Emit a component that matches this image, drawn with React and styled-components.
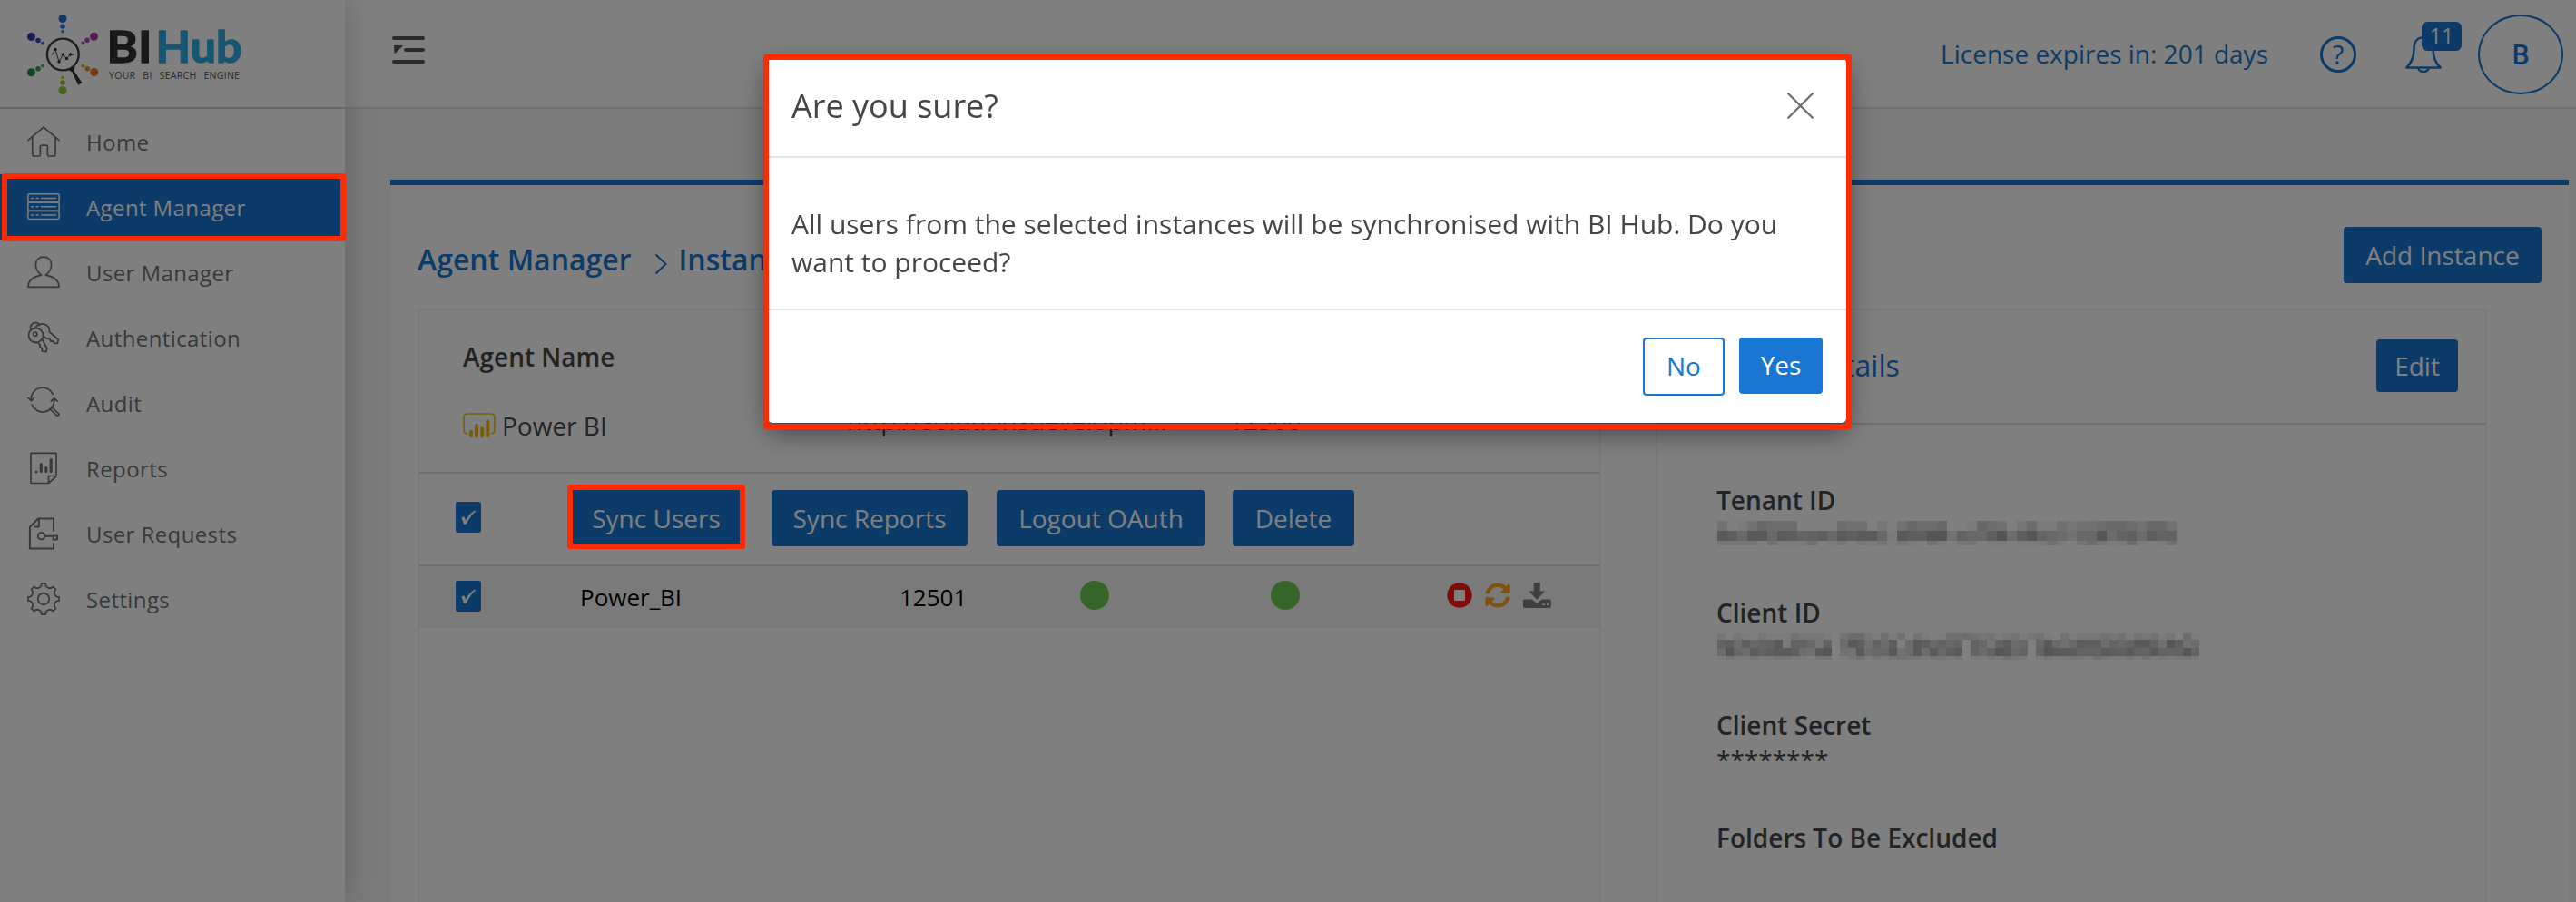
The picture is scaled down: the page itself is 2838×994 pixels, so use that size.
import React from "react";
import styled, { createGlobalStyle, css } from "styled-components";

const BLUE = "#1976d2";
const RED = "#ff2a00";

const GlobalStyle = createGlobalStyle`
  *, *::before, *::after { box-sizing: border-box; }
  html, body { margin: 0; height: 994px; overflow: hidden; }
  body {
    background: #f5f5f5;
    color: #444547;
    font-family: "Open Sans", "Noto Sans", sans-serif;
    font-size: 28px;
    line-height: 38px;
  }
`;

const Shell = styled.div`
  display: flex;
  width: 2838px;
  height: 994px;
  overflow: hidden;
`;

/* Sidebar */
const Sidebar = styled.aside`
  position: relative;
  flex: 0 0 380px;
  background: #fff;
  box-shadow: 0 0 32px rgba(0, 0, 0, 0.2);
`;

const Brand = styled.div`
  height: 120px;
  border-bottom: 2px solid #cfcfcf;
`;

const NavItem = styled.a`
  position: relative;
  display: flex;
  align-items: center;
  gap: 29px;
  height: 72px;
  padding-left: 30px;
  font-size: 24px;
  letter-spacing: 0.4px;
  color: ${(p) => (p.$active ? "#fff" : "#707376")};
  background: ${(p) => (p.$active ? BLUE : "transparent")};
  svg {
    width: 36px;
    height: 36px;
    fill: none;
    stroke: currentColor;
    stroke-width: 1.7;
    stroke-linejoin: round;
    stroke-linecap: round;
  }
`;

const NavLabel = styled.span`
  padding-top: 2px;
`;

const Highlight = styled.span`
  position: absolute;
  z-index: 20;
  top: ${(p) => p.$top}px;
  left: ${(p) => p.$left}px;
  width: ${(p) => p.$w}px;
  height: ${(p) => p.$h}px;
  border: 6px solid ${RED};
  border-radius: 3px;
  pointer-events: none;
`;

/* Main column */
const Main = styled.div`
  flex: 1;
  min-width: 0;
`;

const TopBar = styled.header`
  display: flex;
  align-items: center;
  height: 120px;
  padding: 2px 14px 0 52px;
  background: #fff;
  border-bottom: 2px solid #e0e0e0;
  color: ${BLUE};
`;

const MenuToggle = styled.button`
  width: 36px;
  height: 30px;
  margin: -10px auto 0 0;
  padding: 0;
  border: 0;
  background: none;
  svg { display: block; }
`;

const License = styled.span`
  margin: -3px 57px 0 0;
`;

const HeaderIcon = styled.span`
  position: relative;
  width: 40px;
  height: 40px;
  margin-right: ${(p) => p.$after}px;
  svg { display: block; }
`;

const HelpMark = styled(HeaderIcon)`
  display: flex;
  align-items: center;
  justify-content: center;
  border: 3px solid ${BLUE};
  border-radius: 50%;
  font-size: 29px;
`;

const Badge = styled.span`
  position: absolute;
  left: 18px;
  top: -16px;
  width: 44px;
  height: 32px;
  border-radius: 6px;
  background: ${BLUE};
  color: #fff;
  font-size: 23px;
  line-height: 31px;
  text-align: center;
`;

const Avatar = styled.span`
  display: flex;
  align-items: center;
  justify-content: center;
  width: 94px;
  height: 88px;
  border: 2px solid ${BLUE};
  border-radius: 50%;
  font-size: 30px;
  font-weight: 600;
`;

const Panel = styled.main`
  margin: 78px 8px 0 50px;
  height: 820px;
  padding: 46px 30px 0;
  background: #fff;
  border-top: 6px solid ${BLUE};
`;

const HeadingRow = styled.div`
  display: flex;
  justify-content: space-between;
  height: 62px;
  margin-bottom: 28px;
`;

const Breadcrumb = styled.nav`
  display: flex;
  align-items: flex-start;
  padding-top: 17px;
  font-size: 32px;
  font-weight: 600;
  color: ${BLUE};
  svg { margin: 12px 13px 0 25px; }
`;

const Button = styled.button`
  position: relative;
  width: ${(p) => p.$w}px;
  height: ${(p) => p.$h || 62}px;
  padding: 0;
  border: 0;
  border-radius: 4px;
  background: ${BLUE};
  color: #fff;
  font: inherit;
  white-space: nowrap;
  ${(p) =>
    p.$outline &&
    css`
      border: 2px solid ${BLUE};
      background: #fff;
      color: ${BLUE};
    `}
`;

const Cards = styled.div`
  display: flex;
  gap: 60px;
`;

const Card = styled.section`
  width: ${(p) => p.$w}px;
  height: 700px;
  border: 2px solid #f3f3f3;
`;

const AgentSummary = styled.div`
  display: grid;
  grid-template: 102px 50px / 423px 421px 1fr;
  align-items: center;
  height: 178px;
  padding-left: 48px;
  color: #47494b;
`;

const Strong = styled.div`
  font-weight: 600;
  color: #434648;
`;

const AgentName = styled.div`
  display: flex;
  align-items: center;
  gap: 7px;
`;

const Raised = styled.div`
  margin-top: -12px;
`;

const InstanceToolbar = styled.div`
  display: flex;
  align-items: center;
  height: 102px;
  padding: 0 0 2px 40px;
  border-top: 2px solid #dcdcdc;
`;

const ToolbarButtons = styled.div`
  display: flex;
  gap: 32px;
  margin-left: 98px;
  button:last-child { margin-left: -2px; }
`;

const InstanceRow = styled.div`
  display: grid;
  grid-template-columns: 137px 352px 199px 210px 194px auto;
  align-items: center;
  height: 70px;
  padding-left: 40px;
  border-top: 2px solid #dcdcdc;
  background: #f4f4f4;
  color: #000;
  font-size: 26px;
`;

const CheckBox = styled.span`
  display: block;
  width: 28px;
  height: 34px;
  margin-bottom: 2px;
  border-radius: 3px;
  background: ${BLUE};
`;

const StatusDot = styled.span`
  width: 32px;
  height: 32px;
  margin-bottom: 4px;
  border-radius: 50%;
  background: #6acb50;
`;

const RowActions = styled.span`
  display: flex;
  gap: 14px;
  margin-bottom: 4px;
`;

const DetailsHead = styled.div`
  display: flex;
  align-items: center;
  justify-content: space-between;
  height: 126px;
  padding: 0 30px 2px 70px;
  border-bottom: 2px solid #dcdcdc;
  color: ${BLUE};
  font-size: 32px;
  button { font-size: 28px; }
`;

const Fields = styled.div`
  padding: 64px 0 0 65px;
`;

const Field = styled.div`
  height: 124px;
  color: #434648;
`;

const Redacted = styled.div`
  margin: 4px 0 0 1px;
`;

const CellRow = styled.div`
  display: flex;
  height: ${(p) => p.$h}px;
`;

const Cell = styled.i`
  flex: 0 0 ${(p) => p.$w}px;
  background: rgba(${(p) => (p.$tint ? "0, 14, 10" : "4, 0, 2")}, ${(p) => p.$level * 0.037});
`;

/* Dialog */
const Overlay = styled.div`
  position: fixed;
  inset: 0;
  z-index: 10;
  background: rgba(0, 0, 0, 0.5);
`;

const Dialog = styled.div`
  position: relative;
  width: 1188px;
  height: 402px;
  margin: 64px 0 0 846px;
  border-radius: 5px;
  background: #fff;
  box-shadow: 0 10px 30px rgba(0, 0, 0, 0.5), 0 0 0 1px rgba(0, 0, 0, 0.2);
`;

const DialogHead = styled.div`
  display: flex;
  align-items: center;
  justify-content: space-between;
  height: 110px;
  padding: 0 36px 0 26px;
  border-bottom: 2px solid #e5e5e5;
  font-size: 36px;
  span { margin-top: -3px; }
  svg { margin-top: -4px; }
`;

const DialogBody = styled.div`
  height: 168px;
  padding: 52px 26px 0;
  border-bottom: 2px solid #e5e5e5;
  font-size: 30px;
  line-height: 42px;
`;

const DialogActions = styled.div`
  display: flex;
  align-items: flex-start;
  justify-content: flex-end;
  gap: 16px;
  padding: 30px 26px 0;
  button { padding-bottom: 2px; }
`;

function gearPath() {
  const pts = [];
  for (let i = 0; i < 8; i++) {
    const a = (i * Math.PI) / 4;
    [[-0.3, 13.4], [-0.17, 14.6], [-0.13, 17.2], [0.13, 17.2], [0.17, 14.6], [0.3, 13.4]].forEach(([d, r]) => {
      pts.push(`${(18 + r * Math.sin(a + d)).toFixed(2)} ${(18 - r * Math.cos(a + d)).toFixed(2)}`);
    });
  }
  return `M${pts.join("L")}Z`;
}

const icons = {
  home: <path d="M.9 16.6 18 2.2l17.1 14.4M5.8 12.8V32q0 2 2 2h5q1.6 0 1.6-1.6V23.500q0-1.400 1.400-1.400h5.200q1.400 0 1.400 1.400V32.400q0 1.600 1.600 1.600h5q2 0 2-2V12.800" />,
  agent: (
    <g strokeWidth="1.500">
      {[3.8, 13.1, 22.4].map((y) => (
        <g key={y}>
          <rect x=".8" y={y} width="34.400" height="9.100" rx="2" />
          <path d={`M4.500 ${y + 4.6}h2M10 ${y + 4.6}h2M15.500 ${y + 4.600}h16`} />
        </g>
      ))}
    </g>
  ),
  user: <path d="M15.500 21.200C11 17.500 9.400 13.500 9.400 9.700 9.400 4.300 13 1.200 18 1.200s8.600 3.100 8.600 8.500c0 3.800-1.600 7.800-6.100 11.500 9.500 2.300 14.500 5.500 14.500 13.100H1C1 26.700 6 23.500 15.500 21.200Z" />,
  keys: (
    <g strokeWidth="1.800">
      <circle cx="9.500" cy="15.500" r="8" />
      <circle cx="8.800" cy="14.200" r="2.100" />
      <path d="M4 9.500C2.500 4.500 6 1.400 9.500 1.600q3 .2 4 2.700M9 7.500q1-3 5-4.200c6-1.500 11 2.500 10.500 8.500l9.800 8.400-1 4.100-3.600-.2-1-2.200-3 .1-1-2.700-3.200-.2-3.500-2.200M11.800 23.600l2.200 2.200v3l2.300.7v3.300l4.500.9 1-3.700-5-9.500" />
    </g>
  ),
  audit: (
    <>
      <path d="M28.300 8.400A12.600 12.600 0 0 0 4.300 14.800M5.300 20a12.600 12.600 0 0 0 24.300-5.500M1 12.500l3.600 3.200 3.300-3.600M26.300 16.200l3.300-3.400 3.600 3.400" />
      <path d="M24.800 24.600l7.700 7.100q1 1 2 0t0-2l-7.800-7.300" />
    </>
  ),
  reports: (
    <>
      <path d="M4 1.300h28v25.500l-8.500 7.700H4zM23.500 34.500v-8h8.500" />
      <path d="M10 22h.1M15.300 13.500v8M20.800 17.700v3.800M26.200 8.500v13" strokeWidth="3.200" />
    </>
  ),
  requests: (
    <g strokeWidth="2">
      <path d="M29 14.800V1.500H12L2.900 10.800V34.500H29V29M12.800 1.800V10.500H8.500" />
      <circle cx="15.600" cy="20.800" r="3.700" />
      <path d="M19.500 20.800H28.500M28.500 20.500h4.500v4h-4.500z" />
    </g>
  ),
  settings: (
    <>
      <path d={gearPath()} />
      <circle cx="18" cy="18" r="6.300" />
    </>
  ),
};

const nav = [
  ["Home", "home"],
  ["Agent Manager", "agent"],
  ["User Manager", "user"],
  ["Authentication", "keys"],
  ["Audit", "audit"],
  ["Reports", "reports"],
  ["User Requests", "requests"],
  ["Settings", "settings"],
];

const logoDots = [
  [69, 20.5, 4.5, "#2470d0"], [69, 29, 2.8, "#2a80d0"], [69, 34.700, 1.9, "#2f9ad8"],
  [34.5, 40.5, 4.5, "#3638b0"], [42, 44.5, 2.800, "#3048b8"], [47, 47.700, 1.900, "#2a68c8"],
  [103.500, 40.300, 4.500, "#a838b0"], [96, 44.300, 2.800, "#a850b0"], [91.300, 47.500, 1.900, "#a850b0"],
  [34.500, 79.800, 4.500, "#20904a"], [42, 75.800, 2.800, "#28a050"], [47, 72.500, 1.900, "#38b060"],
  [103.700, 79.500, 4.500, "#f07828"], [96.300, 75.700, 2.800, "#e89020"], [91.300, 72.500, 1.900, "#e8b018"],
  [69, 99.500, 4.500, "#90c83c"], [69, 91, 2.800, "#98c030"], [69, 85.300, 1.900, "#c8c820"],
];

function Logo() {
  return (
    <svg width="300" height="118" viewBox="0 0 300 118" role="img" aria-label="BI Hub">
      {logoDots.map(([x, y, r, c]) => (
        <circle key={`${x}-${y}`} cx={x} cy={y} r={r} fill={c} />
      ))}
      <circle cx="69.300" cy="60" r="17.400" fill="none" stroke="#404040" strokeWidth="2.400" />
      <path d="M57 60.500L61 54.500L65 68L69.300 60L73.500 64.500L77.500 60H82" fill="none" stroke="#404040" strokeWidth="1" />
      {[[61, 54.500], [65, 68], [69.300, 60], [73.500, 64.500], [77.500, 60]].map(([x, y]) => (
        <circle key={x} cx={x} cy={y} r="1.700" fill="#303030" />
      ))}
      <path d="M76 78l3-4 3.500-1 -1 5 9 13.200-4.300 2.600-7.200-15z" fill="#303030" />
      <g fontFamily="Lato, sans-serif" fontWeight="700" fontSize="47.500" strokeWidth="1.300" strokeLinejoin="round">
        <text x="117.500" y="69" textLength="50" lengthAdjust="spacingAndGlyphs" fill="#333" stroke="#333">BI</text>
        <text x="171.500" y="69" textLength="95" lengthAdjust="spacingAndGlyphs" fill="#2fabe0" stroke="#2fabe0">Hub</text>
      </g>
      <text x="120" y="87" fontFamily="Open Sans, sans-serif" fontWeight="500" fontSize="10.600" textLength="144" wordSpacing="5" fill="#555">
        YOUR BI SEARCH ENGINE
      </text>
    </svg>
  );
}

const tenantMosaic = {
  w: 11,
  rows: [
    [11, "3013544400004330203544500154302411323345543553"],
    [11, "8758858766758788518779936557947965435594674766"],
    [5, "2222031113012021202103102201101113102421141013"],
  ],
};

const clientMosaic = {
  w: 9,
  rows: [
    [7, "20210211132221034421313031013343231231231031222323132312041"],
    [9, "67475668166526048736470487565606526845058535877465688639734"],
    [9, "49548678874389033845583484857806469856069888666877866866696"],
    [4, "12112112211022012312123221221201121321012112213211213121221"],
  ],
};

function Mosaic({ data }) {
  return (
    <Redacted>
      {data.rows.map(([h, levels], r) => (
        <CellRow key={r} $h={h}>
          {levels.split("").map((l, i) => (
            <Cell key={i} $w={data.w} $level={Number(l)} $tint={(i * 7 + r) % 3 === 0} />
          ))}
        </CellRow>
      ))}
    </Redacted>
  );
}

function Check() {
  return (
    <CheckBox>
      <svg width="28" height="34" viewBox="0 0 28 34">
        <path d="M6.500 18.500q.6-2.300 2.500-2 1.300.3 2 4.200Q15 13 20.500 9.700l2 .2Q16 15.500 12 24.300q-2.700 1.500-3.400-.3-.6-3.500-2.100-5.500z" fill="#fff" />
      </svg>
    </CheckBox>
  );
}

export default function App() {
  return (
    <>
      <GlobalStyle />
      <Shell>
        <Sidebar>
          <Brand>
            <Logo />
          </Brand>
          {nav.map(([label, icon]) => (
            <NavItem key={label} $active={icon === "agent"}>
              <svg viewBox="0 0 36 36">{icons[icon]}</svg>
              <NavLabel>{label}</NavLabel>
              {icon === "agent" && <Highlight $top={-1} $left={2} $w={379} $h={75} />}
            </NavItem>
          ))}
        </Sidebar>
        <Main>
          <TopBar>
            <MenuToggle aria-label="Toggle menu">
              <svg width="36" height="30" viewBox="0 0 36 30">
                <path d="M2 2h32M15 15h19M2 28h32" stroke="#555" strokeWidth="4" strokeLinecap="round" />
                <path d="M2 10h10.500L2.500 19.500z" fill="#555" />
              </svg>
            </MenuToggle>
            <License>License expires in: 201 days</License>
            <HelpMark $after={54}>?</HelpMark>
            <HeaderIcon $after={40}>
              <svg width="40" height="40" viewBox="0 0 40 40" fill="none" stroke={BLUE} strokeWidth="2.600" strokeLinejoin="round">
                <path d="M1.500 34.500C6 30 9.500 24 9.500 14 9.500 5.500 14 1.300 20 1.300S30.500 5.500 30.500 14c0 10 3.500 16 8 20.500z" />
                <path d="M14.500 35c0 5.300 11 5.300 11 0" />
              </svg>
              <Badge>11</Badge>
            </HeaderIcon>
            <Avatar>B</Avatar>
          </TopBar>
          <Panel>
            <HeadingRow>
              <Breadcrumb>
                Agent Manager
                <svg width="14" height="24" viewBox="0 0 14 24" fill="none" stroke={BLUE} strokeWidth="2">
                  <path d="M1.500 1.500L12.500 12L1.500 22.500" />
                </svg>
                Instances
              </Breadcrumb>
              <Button $w={218}>Add Instance</Button>
            </HeadingRow>
            <Cards>
              <Card $w={1304}>
                <AgentSummary>
                  <Strong>Agent Name</Strong>
                  <span />
                  <span />
                  <AgentName>
                    <svg width="36" height="28" viewBox="0 0 36 28" fill="none" stroke="#efbb14" strokeLinecap="round">
                      <path d="M4.500 22.800Q1 22.300 1 18.500V5Q1 1 5 1H31Q35 1 35 5V18.500Q35 22.300 31.500 22.800" strokeWidth="1.600" />
                      <path d="M9 20.800V25.500M15 14V25.500M21.200 17.300V25.500M27.300 9.200V25.500" strokeWidth="4" />
                    </svg>
                    Power BI
                  </AgentName>
                  <Raised>http://solutionsdevelopm...</Raised>
                  <Raised>12500</Raised>
                </AgentSummary>
                <InstanceToolbar>
                  <Check />
                  <ToolbarButtons>
                    <Button $w={190}>
                      Sync Users
                      <Highlight $top={-6} $left={-3} $w={196} $h={71} />
                    </Button>
                    <Button $w={216}>Sync Reports</Button>
                    <Button $w={230}>Logout OAuth</Button>
                    <Button $w={134}>Delete</Button>
                  </ToolbarButtons>
                </InstanceToolbar>
                <InstanceRow>
                  <Check />
                  <span>Power_BI</span>
                  <span>12501</span>
                  <StatusDot />
                  <StatusDot />
                  <RowActions>
                    <svg width="28" height="28" viewBox="0 0 28 28">
                      <circle cx="14" cy="14" r="13.700" fill="#ff1414" />
                      <rect x="8" y="8" width="12" height="12" rx="1" fill="#fff" />
                    </svg>
                    <svg width="28" height="28" viewBox="0 0 512 512" fill="#ffa51c">
                      <path d="M370.720 133.280C339.458 104.008 298.888 87.962 255.848 88c-77.458.068-144.328 53.178-162.791 126.850-1.344 5.363-6.122 9.150-11.651 9.150H24.103c-7.498 0-13.194-6.807-11.807-14.176C33.933 94.924 134.813 8 256 8c66.448 0 126.791 26.136 171.315 68.685L463.030 40.970C478.149 25.851 504 36.559 504 57.941V192c0 13.255-10.745 24-24 24H345.941c-21.382 0-32.090-25.851-16.971-40.971l41.750-41.749zM32 296h134.059c21.382 0 32.090 25.851 16.971 40.971l-41.750 41.750c31.262 29.273 71.835 45.319 114.876 45.280 77.418-.070 144.315-53.144 162.787-126.849 1.344-5.363 6.122-9.150 11.651-9.150h57.304c7.498 0 13.194 6.807 11.807 14.176C478.067 417.076 377.187 504 256 504c-66.448 0-126.791-26.136-171.315-68.685L48.970 471.030C33.851 486.149 8 475.441 8 454.059V320c0-13.255 10.745-24 24-24z" />
                    </svg>
                    <svg width="31" height="28" viewBox="0 0 31 28">
                      <path d="M11.700 0h7v9.500h5.300L15.200 19 6.400 9.500h5.300z" fill="#7e7e7e" />
                      <path d="M2 18.500h7.500l5.700 4.300 5.700-4.300H29q1.800 0 1.800 2V26q0 2-1.800 2H2q-2 0-2-2v-5.500q0-2 2-2zM21.500 23v2h2.300v-2zM26 23v2h2.300v-2z" fill="#7e7e7e" fillRule="evenodd" />
                    </svg>
                  </RowActions>
                </InstanceRow>
              </Card>
              <Card $w={916}>
                <DetailsHead>
                  Agent Details
                  <Button $w={90} $h={58}>Edit</Button>
                </DetailsHead>
                <Fields>
                  <Field>
                    <Strong>Tenant ID</Strong>
                    <Mosaic data={tenantMosaic} />
                  </Field>
                  <Field>
                    <Strong>Client ID</Strong>
                    <Mosaic data={clientMosaic} />
                  </Field>
                  <Field>
                    <Strong>Client Secret</Strong>
                    ********
                  </Field>
                  <Field>
                    <Strong>Folders To Be Excluded</Strong>
                  </Field>
                </Fields>
              </Card>
            </Cards>
          </Panel>
        </Main>
      </Shell>
      <Overlay>
        <Dialog role="dialog">
          <DialogHead>
            <span>Are you sure?</span>
            <svg width="29" height="29" viewBox="0 0 29 29" stroke="#6b6b6b" strokeWidth="2.200" strokeLinecap="round">
              <path d="M1.200 1.200L27.800 27.800M27.800 1.200L1.200 27.800" />
            </svg>
          </DialogHead>
          <DialogBody>
            All users from the selected instances will be synchronised with BI Hub. Do you want to proceed?
          </DialogBody>
          <DialogActions>
            <Button $w={90} $h={64} $outline>No</Button>
            <Button $w={92}>Yes</Button>
          </DialogActions>
          <Highlight $top={-4} $left={-5} $w={1199} $h={413} />
        </Dialog>
      </Overlay>
    </>
  );
}
